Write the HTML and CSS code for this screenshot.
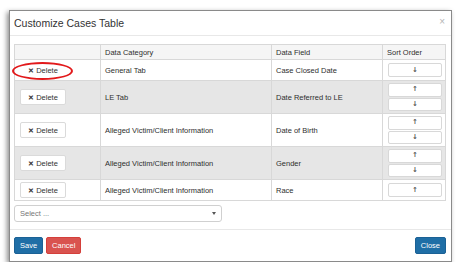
FILE: index.html
```html
<!DOCTYPE html>
<html lang="en">
  <head>
    <meta charset="UTF-8" />
    <title>Customize Cases Table</title>
    <link rel="stylesheet" href="styles.css">
  </head>
  <body>
    <div class="modal">
      <div class="modal-header">
        <span class="modal-title">Customize Cases Table</span>
        <span class="close-x">×</span>
      </div>

      <div class="modal-body">
        <table class="cases-table">
          <thead>
            <tr>
              <th class="col-action"></th>
              <th class="col-category">Data Category</th>
              <th class="col-field">Data Field</th>
              <th class="col-sort">Sort Order</th>
            </tr>
          </thead>
          <tbody>
            <tr>
              <td>
                <div class="marked">
                  <button class="delete-btn plain"><span class="x">✕</span> Delete</button>
                  <span class="circle"></span>
                </div>
              </td>
              <td>General Tab</td>
              <td>Case Closed Date</td>
              <td><button class="sort-btn">↓</button></td>
            </tr>
            <tr class="shaded">
              <td><button class="delete-btn"><span class="x">✕</span> Delete</button></td>
              <td>LE Tab</td>
              <td>Date Referred to LE</td>
              <td>
                <button class="sort-btn">↑</button>
                <button class="sort-btn">↓</button>
              </td>
            </tr>
            <tr>
              <td><button class="delete-btn"><span class="x">✕</span> Delete</button></td>
              <td>Alleged Victim/Client Information</td>
              <td>Date of Birth</td>
              <td>
                <button class="sort-btn">↑</button>
                <button class="sort-btn">↓</button>
              </td>
            </tr>
            <tr class="shaded">
              <td><button class="delete-btn"><span class="x">✕</span> Delete</button></td>
              <td>Alleged Victim/Client Information</td>
              <td>Gender</td>
              <td>
                <button class="sort-btn">↑</button>
                <button class="sort-btn">↓</button>
              </td>
            </tr>
            <tr>
              <td><button class="delete-btn"><span class="x">✕</span> Delete</button></td>
              <td>Alleged Victim/Client Information</td>
              <td>Race</td>
              <td><button class="sort-btn">↑</button></td>
            </tr>
          </tbody>
        </table>

        <div class="select-box">
          <span>Select ...</span>
          <span class="caret"></span>
        </div>
      </div>

      <div class="modal-footer">
        <div class="left-buttons">
          <button class="btn btn-primary">Save</button>
          <button class="btn btn-danger">Cancel</button>
        </div>
        <button class="btn btn-primary">Close</button>
      </div>
    </div>
  </body>
</html>
```

FILE: styles.css
```css
body {
  margin: 0;
  padding: 10px 0 0 9px;
  background: #fff;
  font-family: "Liberation Sans", Arial, sans-serif;
  color: #333;
}

.modal {
  width: 441px;
  height: 250px;
  border: 1px solid #8a8a8a;
  background: #fff;
  box-shadow: -2px 2px 5px rgba(0, 0, 0, 0.45);
  display: flex;
  flex-direction: column;
}

.modal-header {
  height: 24px;
  border-bottom: 1px solid #e8e8e8;
  display: flex;
  align-items: center;
  justify-content: space-between;
  padding: 0 6px 0 4px;
}

.modal-title {
  font-size: 10.5px;
  color: #333;
}

.close-x {
  font-size: 10px;
  color: #b5b5b5;
  margin-top: -4px;
}

.modal-body {
  padding: 8px 5px 7px 4px;
  border-bottom: 1px solid #e8e8e8;
}

.cases-table {
  width: 432px;
  border-collapse: collapse;
  border: 1px solid #d8d8d8;
  font-size: 7.5px;
  table-layout: fixed;
}

.col-action {
  width: 77px;
}

.col-category {
  width: 162px;
}

.col-field {
  width: 102px;
}

.cases-table th,
.cases-table td {
  border: 1px solid #d8d8d8;
  text-align: left;
  padding: 2px 4px;
  vertical-align: middle;
  font-weight: normal;
  color: #2e2e2e;
  white-space: nowrap;
}

.cases-table th {
  height: 10px;
  background: #f5f5f5;
}

.cases-table tr.shaded td {
  background: #e6e6e6;
}

.delete-btn {
  width: 46px;
  height: 16px;
  padding: 0;
  background: #fff;
  border: 1px solid #dadada;
  border-radius: 2px;
  font-family: inherit;
  font-size: 7.5px;
  color: #333;
  display: block;
  margin-left: 1px;
}

.delete-btn.plain {
  border-color: #fff;
}

.delete-btn .x {
  font-weight: bold;
  font-size: 7px;
}

.marked {
  position: relative;
}

.circle {
  position: absolute;
  left: -7px;
  top: 0;
  width: 57px;
  height: 14px;
  border: 2px solid #e2191b;
  border-radius: 50%;
}

.sort-btn {
  display: block;
  width: 54px;
  height: 13.5px;
  padding: 0;
  margin: 0 0 1px 1px;
  background: #fff;
  border: 1px solid #d8d8d8;
  border-radius: 2px;
  font-family: "DejaVu Sans", sans-serif;
  font-size: 7px;
  font-weight: bold;
  color: #555;
  line-height: 11px;
}

.sort-btn:last-child {
  margin-bottom: 0;
}

.select-box {
  margin-top: 4px;
  width: 196px;
  height: 15px;
  border: 1px solid #d0d0d0;
  border-radius: 3px;
  display: flex;
  align-items: center;
  justify-content: space-between;
  padding: 0 5px;
  font-size: 7.5px;
  color: #777;
}

.caret {
  width: 0;
  height: 0;
  border-left: 2.5px solid transparent;
  border-right: 2.5px solid transparent;
  border-top: 3px solid #555;
}

.modal-footer {
  flex: 1;
  display: flex;
  justify-content: space-between;
  align-items: flex-start;
  padding: 7px 5px 0 4px;
}

.left-buttons {
  display: flex;
  gap: 3px;
}

.btn {
  height: 17px;
  padding: 0 5px;
  border: 1px solid transparent;
  border-radius: 2px;
  font-family: inherit;
  font-size: 7.5px;
  color: #fff;
}

.btn-primary {
  background: #1f6ea6;
  border-color: #1b6195;
}

.btn-danger {
  background: #d9534f;
  border-color: #d43f3a;
  padding: 0 5px;
}
```
